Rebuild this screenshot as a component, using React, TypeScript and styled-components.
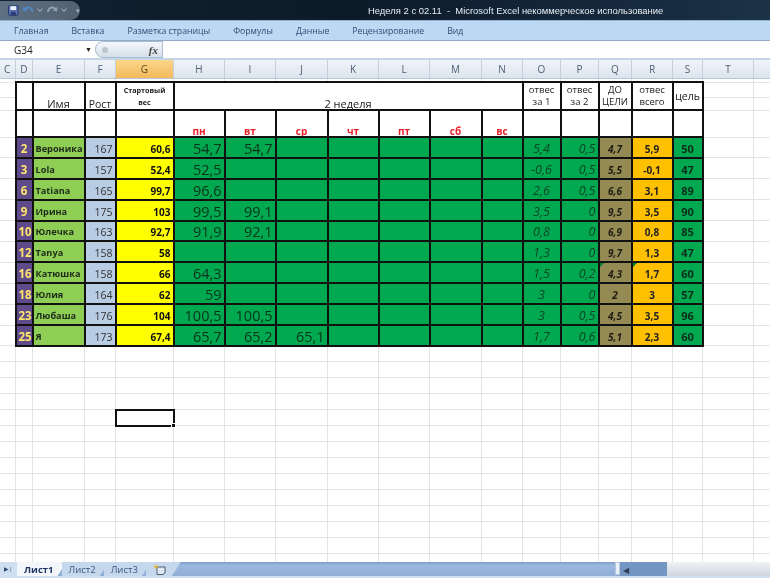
import React from "react";
import styled, { createGlobalStyle } from "styled-components";

const GlobalStyle = createGlobalStyle`
  html, body { margin: 0; padding: 0; overflow: hidden; background: #fff; }
  * { box-sizing: border-box; }
`;

const Window = styled.div`
  width: 770px;
  height: 578px;
  display: flex;
  flex-direction: column;
  overflow: hidden;
  font-family: "Open Sans", "Noto Sans", sans-serif;
  filter: blur(0.35px);
`;

const TitleBar = styled.div`
  height: 20px;
  flex: none;
  display: flex;
  align-items: center;
  background: linear-gradient(90deg, #13202f 0%, #0d1a28 45%, #14263a 75%, #1b3247 100%);
  color: #e6edf3;
`;

const QuickAccess = styled.div`
  width: 80px;
  height: 19px;
  display: flex;
  align-items: center;
  gap: 3px;
  padding-left: 8px;
  background: linear-gradient(90deg, #5d7084, #52616f);
  border-radius: 0 10px 10px 0;
  flex: none;
`;

const Customize = styled.span`
  margin-left: 6px;
  font-size: 7px;
  color: #9fb2c4;
`;

const Title = styled.div`
  margin-left: 288px;
  font-size: 9.45px;
  white-space: pre;
  font-family: "Liberation Sans", sans-serif;
`;

const RibbonTabs = styled.div`
  height: 21px;
  flex: none;
  display: flex;
  align-items: center;
  gap: 23px;
  padding-left: 14px;
  background: #bcd8f2;
  border-top: 1px solid #8fb0d0;
  border-bottom: 1px solid #8fabc8;
`;

const RibbonTab = styled.span`
  font-size: 8.7px;
  color: #2f4d74;
  white-space: nowrap;
`;

const FormulaBar = styled.div`
  height: 19px;
  flex: none;
  display: flex;
  align-items: center;
  background: #fff;
  border-bottom: 2px solid #c3d5e6;
`;

const NameBox = styled.div`
  width: 95px;
  flex: none;
  display: flex;
  justify-content: space-between;
  align-items: center;
  padding: 0 3px 0 14px;
  font-size: 10px;
  color: #222;
`;

const NameArrow = styled.span`
  font-size: 7px;
`;

const FormulaButtons = styled.div`
  width: 68px;
  height: 17px;
  flex: none;
  display: flex;
  align-items: center;
  justify-content: space-between;
  padding: 0 4px 0 6px;
  background: linear-gradient(180deg, #f4f7fa, #d5dfe9);
  border: 1px solid #a9bdd1;
  border-radius: 8px 0 0 8px;
`;

const CancelDot = styled.span`
  width: 6px;
  height: 6px;
  border-radius: 50%;
  background: #b9c6d2;
`;

const Fx = styled.span`
  font-family: "Liberation Serif", serif;
  font-style: italic;
  font-weight: bold;
  font-size: 11px;
  color: #444;
`;

const Sheet = styled.div`
  flex: 1;
  min-height: 0;
  overflow: hidden;
  background: #fff;
`;

const Table = styled.table`
  border-collapse: collapse;
  table-layout: fixed;
  width: 770px;
  margin-left: -1px;
`;

const ColumnHead = styled.th<{ $active?: boolean }>`
  height: 18px;
  padding: 0;
  font-size: 10px;
  font-weight: normal;
  color: ${(p) => (p.$active ? "#5b4a20" : "#4f6075")};
  background: ${(p) =>
    p.$active
      ? "linear-gradient(180deg, #fbd68a, #f4b95c)"
      : "linear-gradient(180deg, #f0f4f8, #dbe4ee)"};
  border-right: 1px solid #c2cfdc;
  border-bottom: 1px solid #b7c6d6;
  overflow: hidden;
`;

const Blank = styled.td<{ $height?: number; $selected?: boolean }>`
  height: ${(p) => p.$height ?? 16}px;
  padding: 0;
  border: ${(p) => (p.$selected ? "2px solid #111" : "1px solid #e4e4e4")};
  position: relative;
`;

const FillHandle = styled.span`
  position: absolute;
  right: -3px;
  bottom: -3px;
  width: 5px;
  height: 5px;
  background: #111;
  border: 1px solid #fff;
`;

const HeadCell = styled.td<{ $size?: number; $bold?: boolean; $align?: string; $color?: string }>`
  padding: 0;
  border: 2px solid #111;
  text-align: center;
  vertical-align: ${(p) => p.$align ?? "bottom"};
  font-size: ${(p) => p.$size ?? 12}px;
  font-weight: ${(p) => (p.$bold ? 700 : 400)};
  line-height: 1;
  color: ${(p) => p.$color ?? "#222"};
  overflow: hidden;
`;

const StackedLine = styled.div`
  line-height: 12.5px;
`;

const DataCell = styled.td<{
  $bg: string;
  $color: string;
  $size: number;
  $bold?: boolean;
  $italic?: boolean;
  $align?: string;
}>`
  position: relative;
  height: 20.9px;
  padding: 0 2px;
  border: 2px solid #111;
  background: ${(p) => p.$bg};
  color: ${(p) => p.$color};
  font-size: ${(p) => p.$size}px;
  font-weight: ${(p) => (p.$bold ? 700 : 400)};
  font-style: ${(p) => (p.$italic ? "italic" : "normal")};
  text-align: ${(p) => p.$align ?? "right"};
  vertical-align: bottom;
  line-height: 16px;
  white-space: nowrap;
  overflow: hidden;
`;

const ErrorMark = styled.span`
  position: absolute;
  left: 0;
  top: 0;
  border-top: 4px solid #00803a;
  border-right: 4px solid transparent;
`;

const TabStrip = styled.div`
  height: 16px;
  flex: none;
  display: flex;
  align-items: flex-start;
  background: linear-gradient(180deg, #7e9ec9, #9bb8df 25%, #8fadd6);
  border-bottom: 2px solid #cfe0f0;
`;

const TabNav = styled.div`
  width: 17px;
  height: 14px;
  flex: none;
  display: flex;
  align-items: center;
  justify-content: center;
  background: #cddff1;
  color: #2c4a74;
  font-size: 6px;
`;

const SheetTab = styled.div<{ $active?: boolean }>`
  height: 14px;
  padding: 0 13px 0 7px;
  display: flex;
  align-items: center;
  flex: none;
  margin-right: -5px;
  font-size: 9.5px;
  font-weight: ${(p) => (p.$active ? 700 : 400)};
  color: ${(p) => (p.$active ? "#1d3562" : "#39557f")};
  background: ${(p) => (p.$active ? "#f3f7fc" : "#c5d8ee")};
  clip-path: polygon(0 0, 100% 0, calc(100% - 9px) 100%, 0 100%);
`;

const NewSheetTab = styled(SheetTab)`
  width: 35px;
  padding: 0 0 0 7px;
`;

const Spacer = styled.div`
  flex: 1;
`;

const SplitBar = styled.div`
  width: 5px;
  height: 13px;
  flex: none;
  background: #e9f0f7;
  border: 1px solid #b6c9de;
`;

const ScrollBack = styled.div`
  width: 47px;
  height: 14px;
  flex: none;
  display: flex;
  align-items: center;
  padding-left: 3px;
  background: #7396c2;
  color: #2d3f57;
  font-size: 8px;
`;

const ScrollTrack = styled.div`
  width: 103px;
  height: 14px;
  flex: none;
  background: linear-gradient(180deg, #eff2f6, #cfd6de);
`;

type Row = {
  n: number;
  name: string;
  height: number;
  start: string;
  days: string[];
  o1: string;
  o2: string;
  goal: string;
  total: string;
  target: number;
  mark?: boolean;
};

const rows: Row[] = [
  { n: 2, name: "Вероника", height: 167, start: "60,6", days: ["54,7", "54,7"], o1: "5,4", o2: "0,5", goal: "4,7", total: "5,9", target: 50 },
  { n: 3, name: "Lola", height: 157, start: "52,4", days: ["52,5"], o1: "-0,6", o2: "0,5", goal: "5,5", total: "-0,1", target: 47 },
  { n: 6, name: "Tatiana", height: 165, start: "99,7", days: ["96,6"], o1: "2,6", o2: "0,5", goal: "6,6", total: "3,1", target: 89 },
  { n: 9, name: "Ирина", height: 175, start: "103", days: ["99,5", "99,1"], o1: "3,5", o2: "0", goal: "9,5", total: "3,5", target: 90 },
  { n: 10, name: "Юлечка", height: 163, start: "92,7", days: ["91,9", "92,1"], o1: "0,8", o2: "0", goal: "6,9", total: "0,8", target: 85 },
  { n: 12, name: "Tanya", height: 158, start: "58", days: [], o1: "1,3", o2: "0", goal: "9,7", total: "1,3", target: 47 },
  { n: 16, name: "Катюшка", height: 158, start: "66", days: ["64,3"], o1: "1,5", o2: "0,2", goal: "4,3", total: "1,7", target: 60, mark: true },
  { n: 18, name: "Юлия", height: 164, start: "62", days: ["59"], o1: "3", o2: "0", goal: "2", total: "3", target: 57 },
  { n: 23, name: "Любаша", height: 176, start: "104", days: ["100,5", "100,5"], o1: "3", o2: "0,5", goal: "4,5", total: "3,5", target: 96 },
  { n: 25, name: "Я", height: 173, start: "67,4", days: ["65,7", "65,2", "65,1"], o1: "1,7", o2: "0,6", goal: "5,1", total: "2,3", target: 60 },
];

const columns = [
  ["C", 16], ["D", 17], ["E", 52], ["F", 31], ["G", 58], ["H", 51], ["I", 51], ["J", 52],
  ["K", 51], ["L", 51], ["M", 52], ["N", 41], ["O", 38], ["P", 38], ["Q", 33], ["R", 41],
  ["S", 30], ["T", 51], ["", 17],
] as const;

const weekdays = ["пн", "вт", "ср", "чт", "пт", "сб", "вс"];
const tabs = ["Главная", "Вставка", "Разметка страницы", "Формулы", "Данные", "Рецензирование", "Вид"];
const blankRows = Array.from({ length: 14 }, (_, i) => i);

const SaveIcon = () => (
  <svg width="11" height="11" viewBox="0 0 11 11">
    <rect x="0.5" y="0.5" width="10" height="10" rx="1" fill="#5a6fb0" stroke="#2b3a70" />
    <rect x="2.5" y="1" width="6" height="4" fill="#eef2fa" />
    <rect x="3" y="7" width="5" height="3.5" fill="#2b3a70" />
  </svg>
);

const ArrowIcon = ({ flip, color }: { flip?: boolean; color: string }) => (
  <svg width="13" height="12" viewBox="0 0 13 12" style={flip ? { transform: "scaleX(-1)" } : undefined}>
    <path d="M3 5.5 C5 2.5 10 2.5 11 8" fill="none" stroke={color} strokeWidth="2" />
    <path d="M1 2.5 L1.5 7.5 L6 6.5 Z" fill={color} />
  </svg>
);

const Chevron = () => (
  <svg width="6" height="4" viewBox="0 0 6 4">
    <path d="M0.5 0.5 L3 3.5 L5.5 0.5" fill="none" stroke="#b5c4d2" />
  </svg>
);

const NewSheetIcon = () => (
  <svg width="14" height="11" viewBox="0 0 14 11">
    <path d="M4 3 H12 V9 L10 10.5 H4 Z" fill="#dfe8f2" stroke="#4f5d70" />
    <path d="M3 0 L4 2 L6 2.5 L4 3.5 L3 5.5 L2 3.5 L0 2.5 L2 2 Z" fill="#e8b23a" />
  </svg>
);

const BlankRow = ({ selected, height }: { selected?: boolean; height?: number }) => (
  <tr>
    {columns.map(([name]) => (
      <Blank key={name} $height={height} $selected={selected && name === "G"}>
        {selected && name === "G" && <FillHandle />}
      </Blank>
    ))}
  </tr>
);

const App: React.FC = () => {
  return (
    <Window>
      <GlobalStyle />
      <TitleBar>
        <QuickAccess>
          <SaveIcon />
          <ArrowIcon color="#4f86c6" />
          <Chevron />
          <ArrowIcon flip color="#8fa3b5" />
          <Chevron />
          <Customize>▾</Customize>
        </QuickAccess>
        <Title>Неделя 2 с 02.11  -  Microsoft Excel некоммерческое использование</Title>
      </TitleBar>
      <RibbonTabs>
        {tabs.map((tab) => (
          <RibbonTab key={tab}>{tab}</RibbonTab>
        ))}
      </RibbonTabs>
      <FormulaBar>
        <NameBox>
          <span>G34</span>
          <NameArrow>▼</NameArrow>
        </NameBox>
        <FormulaButtons>
          <CancelDot />
          <Fx>fx</Fx>
        </FormulaButtons>
      </FormulaBar>
      <Sheet>
        <Table>
          <colgroup>
            {columns.map(([name, width]) => (
              <col key={name} style={{ width }} />
            ))}
          </colgroup>
          <thead>
            <tr>
              {columns.map(([name]) => (
                <ColumnHead key={name} $active={name === "G"}>
                  {name}
                </ColumnHead>
              ))}
            </tr>
          </thead>
          <tbody>
            <BlankRow height={4} />
            <tr>
              <Blank $height={15} />
              <HeadCell rowSpan={2} />
              <HeadCell rowSpan={2} $size={11}>Имя</HeadCell>
              <HeadCell rowSpan={2} $size={10.5}>Рост</HeadCell>
              <HeadCell rowSpan={2} $size={7.2} $bold $align="middle">
                <StackedLine>Стартовый</StackedLine>
                <StackedLine>вес</StackedLine>
              </HeadCell>
              <HeadCell rowSpan={2} colSpan={7} $size={11}>2 неделя</HeadCell>
              <HeadCell rowSpan={2} $size={9.5} $align="middle">
                <StackedLine>отвес</StackedLine>
                <StackedLine>за 1</StackedLine>
              </HeadCell>
              <HeadCell rowSpan={2} $size={9.5} $align="middle">
                <StackedLine>отвес</StackedLine>
                <StackedLine>за 2</StackedLine>
              </HeadCell>
              <HeadCell rowSpan={2} $size={9.5} $align="middle">
                <StackedLine>ДО</StackedLine>
                <StackedLine>ЦЕЛИ</StackedLine>
              </HeadCell>
              <HeadCell rowSpan={2} $size={9.5} $align="middle">
                <StackedLine>отвес</StackedLine>
                <StackedLine>всего</StackedLine>
              </HeadCell>
              <HeadCell rowSpan={2} $size={10.5} $align="middle">цель</HeadCell>
              <Blank $height={15} />
              <Blank $height={15} />
            </tr>
            <tr>
              <Blank $height={13} />
              <Blank $height={13} />
              <Blank $height={13} />
            </tr>
            <tr>
              <Blank $height={27} />
              <HeadCell />
              <HeadCell />
              <HeadCell />
              <HeadCell />
              {weekdays.map((day) => (
                <HeadCell key={day} $size={10} $bold $color="#e8202a">
                  {day}
                </HeadCell>
              ))}
              <HeadCell />
              <HeadCell />
              <HeadCell />
              <HeadCell />
              <HeadCell />
              <Blank $height={27} />
              <Blank $height={27} />
            </tr>
            {rows.map((row) => (
              <tr key={row.n}>
                <Blank $height={20.9} />
                <DataCell $bg="#5f4b8b" $color="#ffe66b" $size={11.5} $bold $align="center">{row.n}</DataCell>
                <DataCell $bg="#8fce55" $color="#1d2a1a" $size={9.2} $bold $align="left">{row.name}</DataCell>
                <DataCell $bg="#b8cce4" $color="#333" $size={10.5}>{row.height}</DataCell>
                <DataCell $bg="#ffff00" $color="#111" $size={10} $bold>{row.start}</DataCell>
                {weekdays.map((day, i) => (
                  <DataCell key={day} $bg="#00a94f" $color="#08331b" $size={14.5}>{row.days[i]}</DataCell>
                ))}
                <DataCell $bg="#00a94f" $color="#0e4526" $size={12.5} $italic $align="center">{row.o1}</DataCell>
                <DataCell $bg="#00a94f" $color="#0e4526" $size={12.5} $italic>{row.o2}</DataCell>
                <DataCell $bg="#948a54" $color="#1f1c10" $size={10} $bold $italic $align="center">
                  {row.mark && <ErrorMark />}
                  {row.goal}
                </DataCell>
                <DataCell $bg="#ffc000" $color="#222" $size={10} $bold $align="center">
                  {row.mark && <ErrorMark />}
                  {row.total}
                </DataCell>
                <DataCell $bg="#00a94f" $color="#0e2c1a" $size={11} $bold $align="center">{row.target}</DataCell>
                <Blank $height={20.9} />
                <Blank $height={20.9} />
              </tr>
            ))}
            {blankRows.map((i) => (
              <BlankRow key={i} selected={i === 4} />
            ))}
          </tbody>
        </Table>
      </Sheet>
      <TabStrip>
        <TabNav>▶|</TabNav>
        <SheetTab $active>Лист1</SheetTab>
        <SheetTab>Лист2</SheetTab>
        <SheetTab>Лист3</SheetTab>
        <NewSheetTab>
          <NewSheetIcon />
        </NewSheetTab>
        <Spacer />
        <SplitBar />
        <ScrollBack>◀</ScrollBack>
        <ScrollTrack />
      </TabStrip>
    </Window>
  );
};

export default App;
